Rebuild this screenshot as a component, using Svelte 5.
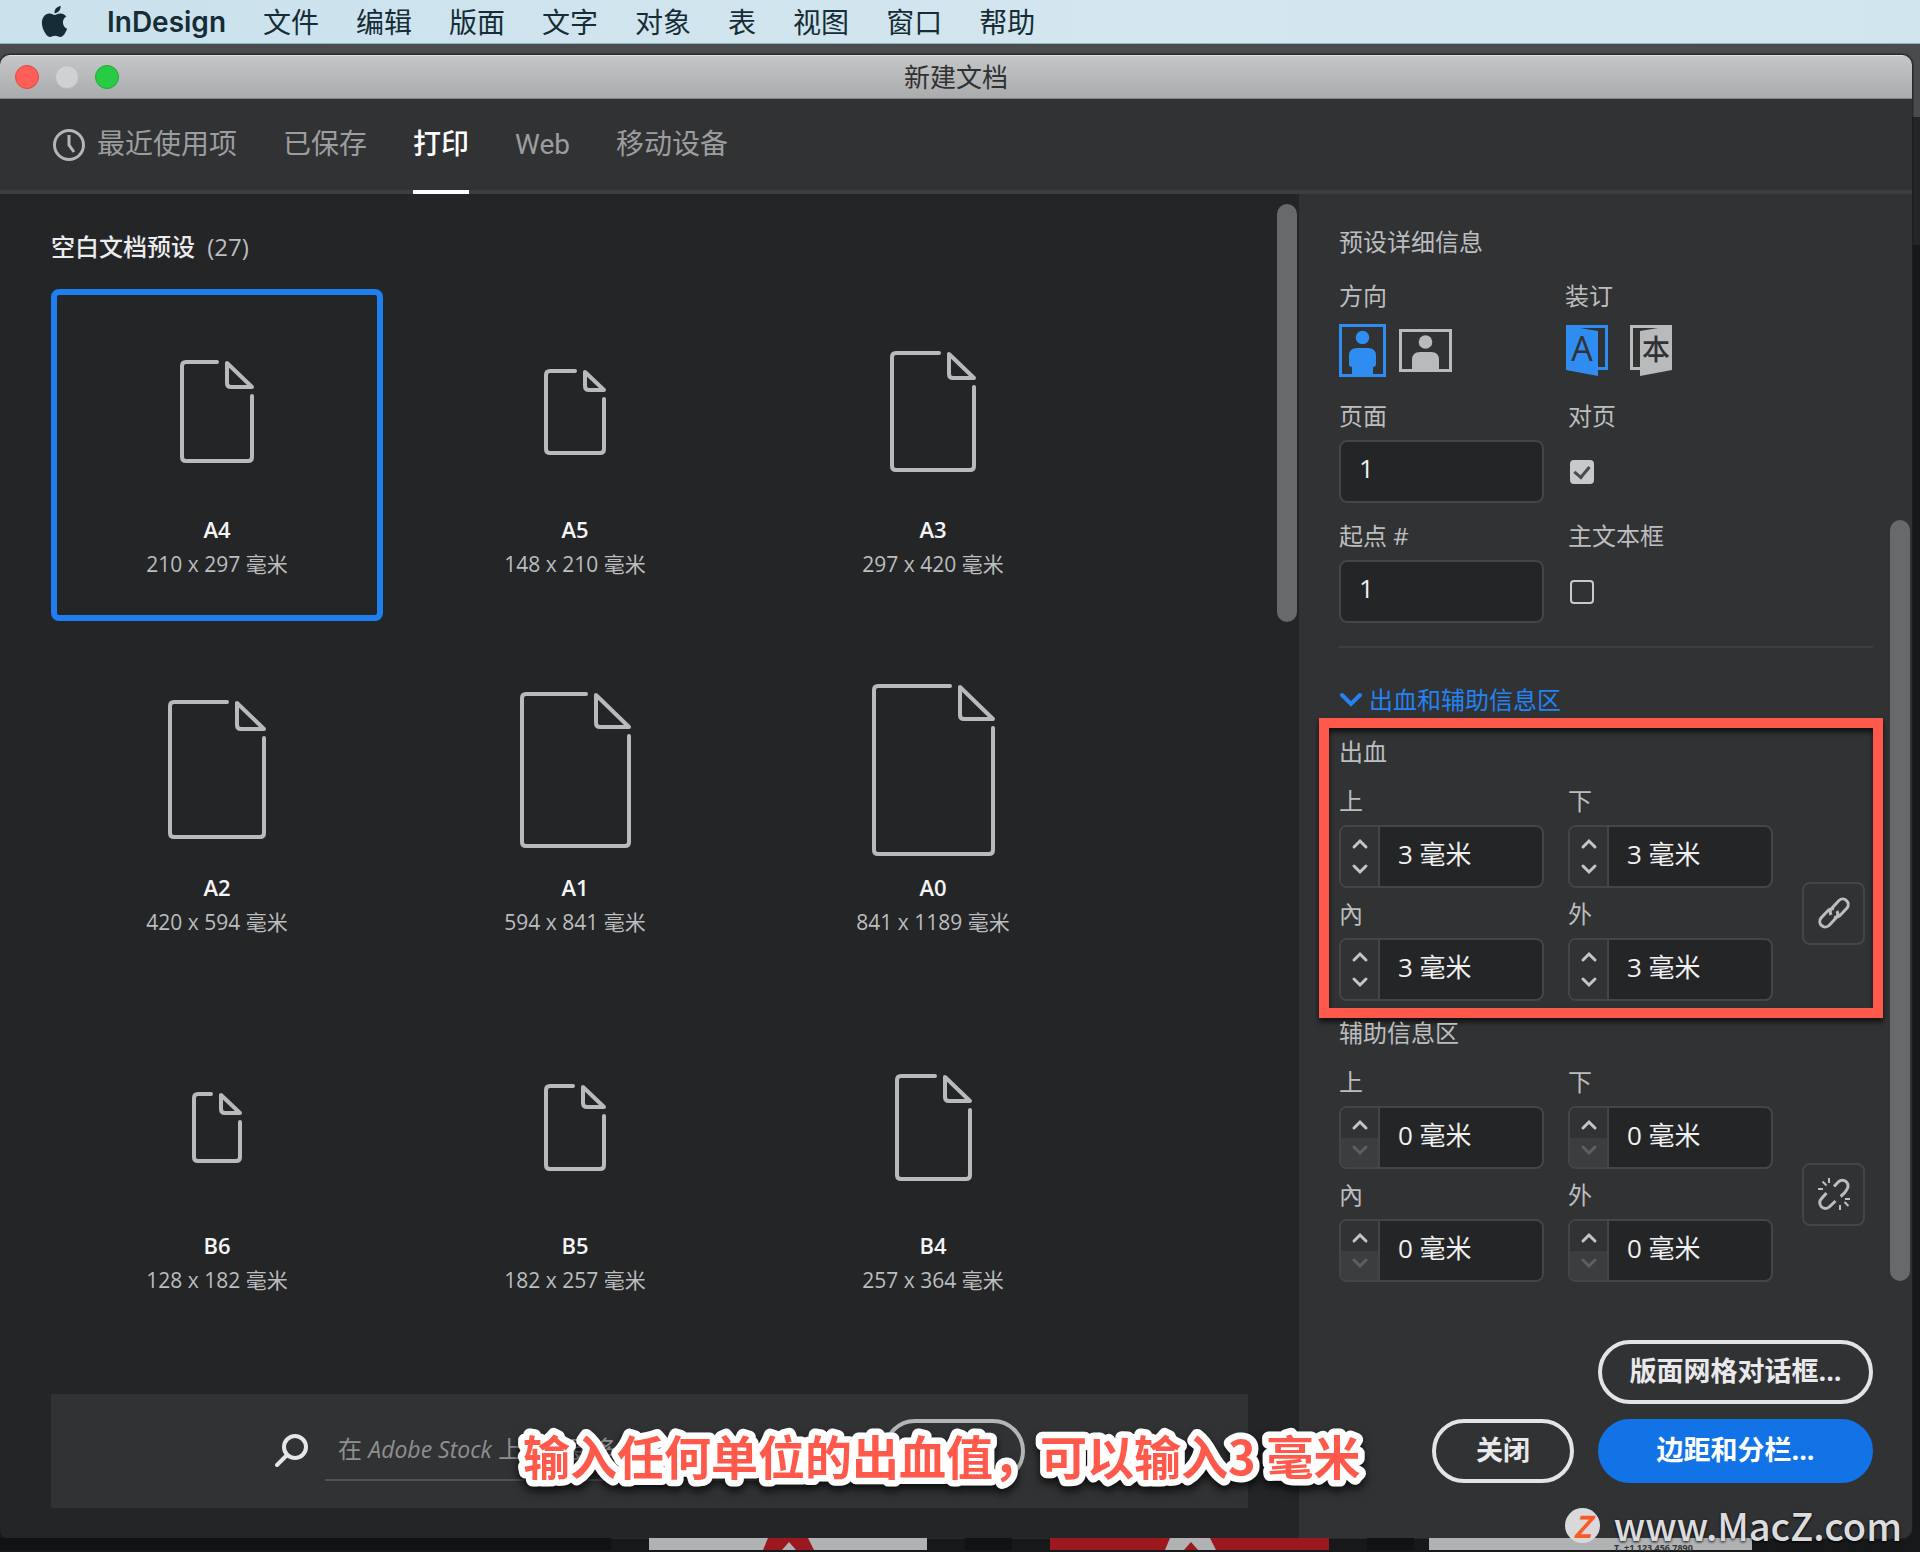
<script lang="ts">
	type Preset = { name: string; size: string; w: number; h: number; fold: number };

	const menus = ['文件', '编辑', '版面', '文字', '对象', '表', '视图', '窗口', '帮助'];
	const tabs = ['最近使用项', '已保存', '打印', 'Web', '移动设备'];

	const presets: Preset[] = [
		{ name: 'A4', size: '210 x 297', w: 74, h: 103, fold: 29 },
		{ name: 'A5', size: '148 x 210', w: 62, h: 86, fold: 23 },
		{ name: 'A3', size: '297 x 420', w: 86, h: 121, fold: 29 },
		{ name: 'A2', size: '420 x 594', w: 98, h: 139, fold: 31 },
		{ name: 'A1', size: '594 x 841', w: 111, h: 156, fold: 37 },
		{ name: 'A0', size: '841 x 1189', w: 123, h: 172, fold: 37 },
		{ name: 'B6', size: '128 x 182', w: 50, h: 71, fold: 23 },
		{ name: 'B5', size: '182 x 257', w: 62, h: 87, fold: 25 },
		{ name: 'B4', size: '257 x 364', w: 77, h: 107, fold: 29 }
	];

	let activeTab = $state('打印');
	let selected = $state('A4');
	let orientation = $state('portrait');
	let binding = $state('left');
	let pages = $state('1');
	let start = $state('1');
	let facing = $state(true);
	let textFrame = $state(false);
	let query = $state('');
	let open = $state(true);

	let bleed = $state({ linked: true, values: [3, 3, 3, 3] });
	let slug = $state({ linked: false, values: [0, 0, 0, 0] });
	const sides = ['上', '下', '內', '外'];

	function step(group: { linked: boolean; values: number[] }, i: number, by: number) {
		const next = Math.max(0, group.values[i] + by);
		group.values = group.values.map((v, n) => (group.linked || n === i ? next : v));
	}

	function sheet({ w, h, fold }: Preset) {
		return `M${w - fold - 8} 2H6Q2 2 2 6V${h - 6}Q2 ${h - 2} 6 ${h - 2}H${w - 6}Q${w - 2} ${h - 2} ${w - 2} ${h - 6}V${fold + 7}`;
	}

	function corner({ w, fold }: Preset) {
		return `M${w - fold + 2} 3V${fold - 6}q0 4 4 4H${w - 2}Z`;
	}
</script>

{#snippet margins(title: string, id: string, group: { linked: boolean; values: number[] })}
	<div class="margins" class:marked={id === 'bleed'}>
		<h3>{title}</h3>
		<div class="margin-row">
			<div class="sides">
				{#each sides as side, i}
					<div class="field">
						<label for="{id}-{i}">{side}</label>
						<div class="spin">
							<div class="steps">
								<button aria-label="{side} +" onclick={() => step(group, i, 1)}>
									<svg width="18" height="12" viewBox="0 0 18 12"><path d="M3 9l6-6 6 6" /></svg>
								</button>
								<button
									aria-label="{side} -"
									disabled={group.values[i] === 0}
									onclick={() => step(group, i, -1)}
								>
									<svg width="18" height="12" viewBox="0 0 18 12"><path d="M3 3l6 6 6-6" /></svg>
								</button>
							</div>
							<input id="{id}-{i}" type="text" value="{group.values[i]} 毫米" />
						</div>
					</div>
				{/each}
			</div>
			<button
				class="link"
				aria-label="link"
				aria-pressed={group.linked}
				onclick={() => (group.linked = !group.linked)}
			>
				{#if group.linked}
					<svg width="34" height="34" viewBox="0 0 34 34">
						<path
							d="M14 19q-2-4 1-7l7-7.500a5.500 5.500 0 0 1 8 7.500l-7 7.500q-3 2.500-6 1.500M20 15q2 4-1 7l-7 7.500a5.500 5.500 0 0 1-8-7.500l7-7.500q3-2.500 6-1.500"
						/>
					</svg>
				{:else}
					<svg width="34" height="34" viewBox="0 0 34 34">
						<path d="M17 9.500l4-4.300a5.600 5.600 0 0 1 8.600 7.600q-1.600 3.200-6 6.700" />
						<path d="M9.500 16l-5 5.600a5.600 5.600 0 0 0 8 8.200l6-5.800" />
						<path class="thin" d="M12 1v5M5.500 4.500l4 4M1 12h5M23 28v5M27.500 25l4 4M28 22h5" />
					</svg>
				{/if}
			</button>
		</div>
	</div>
{/snippet}

<div class="screen">
	<nav class="menubar">
		<svg class="apple" width="31" height="31" viewBox="0 0 24 24">
			<path
				d="M12.152 6.896c-.948 0-2.415-1.078-3.96-1.04-2.040.027-3.910 1.183-4.961 3.014-2.117 3.675-.546 9.103 1.519 12.090 1.013 1.454 2.208 3.090 3.792 3.039 1.520-.065 2.090-.987 3.935-.987 1.831 0 2.350.987 3.960.948 1.637-.026 2.676-1.480 3.676-2.948 1.156-1.688 1.636-3.325 1.662-3.415-.039-.013-3.182-1.221-3.220-4.857-.026-3.040 2.480-4.494 2.597-4.559-1.429-2.090-3.623-2.324-4.390-2.376-2-.156-3.675 1.090-4.610 1.090zM15.530 3.830c.843-1.012 1.400-2.427 1.245-3.830-1.207.052-2.662.805-3.532 1.818-.780.896-1.454 2.338-1.273 3.714 1.338.104 2.715-.688 3.559-1.701"
			/>
		</svg>
		<strong>InDesign</strong>
		{#each menus as menu}
			<button>{menu}</button>
		{/each}
	</nav>

	<div class="desktop">
		<main class="dialog">
			<header class="titlebar">
				<div class="lights">
					<button class="red" aria-label="关闭"></button>
					<button class="grey" aria-label="最小化"></button>
					<button class="green" aria-label="缩放"></button>
				</div>
				<h1>新建文档</h1>
			</header>

			<div class="tabs">
				<svg width="32" height="32" viewBox="0 0 32 32">
					<circle cx="16" cy="16" r="14.500" />
					<path d="M16 6v10l5 7" />
				</svg>
				{#each tabs as tab}
					<button class:active={tab === activeTab} onclick={() => (activeTab = tab)}>{tab}</button>
				{/each}
			</div>

			<div class="body">
				<section class="presets">
					<h2>空白文档预设 <span>(27)</span></h2>
					<div class="cards">
						{#each presets as preset}
							<button
								class="card"
								class:selected={preset.name === selected}
								onclick={() => (selected = preset.name)}
							>
								<span class="sheet">
									<svg width={preset.w} height={preset.h} viewBox="0 0 {preset.w} {preset.h}">
										<path d={sheet(preset)} />
										<path d={corner(preset)} />
									</svg>
								</span>
								<span class="name">{preset.name}</span>
								<span class="size">{preset.size} 毫米</span>
							</button>
						{/each}
					</div>
					<form class="stock" onsubmit={(e) => e.preventDefault()}>
						<svg width="34" height="34" viewBox="0 0 34 34">
							<circle cx="21" cy="13" r="11" />
							<path d="M13 21L3 31" />
						</svg>
						<label class="search">
							{#if !query}
								<span>在 <em>Adobe Stock</em> 上查找更多模板</span>
							{/if}
							<input type="text" aria-label="Adobe Stock" bind:value={query} />
						</label>
						<button class="pill dim" aria-label="前往"></button>
					</form>
					<div class="thumb"></div>
				</section>

				<aside class="details">
					<h3>预设详细信息</h3>
					<div class="columns icons">
						<div class="field">
							<span>方向</span>
							<div class="choice">
								<button
									aria-label="纵向"
									class:on={orientation === 'portrait'}
									onclick={() => (orientation = 'portrait')}
								>
									<svg width="47" height="53" viewBox="0 0 47 53">
										<path class="frame" d="M1.500 1.500h44v50h-44z" />
										<circle cx="23.500" cy="13.500" r="6.800" />
										<path d="M18 24h11q8 0 8 8v8q0 3-3 3v7H13v-7q-3 0-3-3v-8q0-8 8-8z" />
									</svg>
								</button>
								<button
									aria-label="横向"
									class:on={orientation === 'landscape'}
									onclick={() => (orientation = 'landscape')}
								>
									<svg width="53" height="43" viewBox="0 0 53 43">
										<path class="frame" d="M1.500 1.500h50v40h-50z" />
										<circle cx="26.500" cy="13" r="6.800" />
										<path d="M21 23h11q8 0 8 8v11H13V31q0-8 8-8z" />
									</svg>
								</button>
							</div>
						</div>
						<div class="field">
							<span>装订</span>
							<div class="choice wide">
								<button
									aria-label="从左到右"
									class:on={binding === 'left'}
									onclick={() => (binding = 'left')}
								>
									<svg width="42" height="51" viewBox="0 0 42 51">
										<path class="frame" d="M1.500 1.500h39v42h-39z" />
										<path d="M0 0h6l8 3 18 3v45L0 45z" />
										<text class="cut" x="16" y="36" font-size="34">A</text>
									</svg>
								</button>
								<button
									aria-label="从右到左"
									class:on={binding === 'right'}
									onclick={() => (binding = 'right')}
								>
									<svg width="42" height="51" viewBox="0 0 42 51">
										<path class="frame" d="M1.500 1.500h39v42h-39z" />
										<path d="M42 0h-6l-8 3-18 3v45l32-6z" />
										<text class="cut" x="26" y="35" font-size="28">本</text>
									</svg>
								</button>
							</div>
						</div>
					</div>
					<div class="columns">
						<div class="field">
							<label for="pages">页面</label>
							<input id="pages" class="box" type="text" bind:value={pages} />
						</div>
						<div class="field">
							<label for="facing">对页</label>
							<div class="tick"><input id="facing" type="checkbox" bind:checked={facing} /></div>
						</div>
						<div class="field">
							<label for="start">起点 #</label>
							<input id="start" class="box" type="text" bind:value={start} />
						</div>
						<div class="field">
							<label for="frame">主文本框</label>
							<div class="tick"><input id="frame" type="checkbox" bind:checked={textFrame} /></div>
						</div>
					</div>
					<hr />
					<button class="toggle" aria-expanded={open} onclick={() => (open = !open)}>
						<svg width="24" height="16" viewBox="0 0 24 16"><path d="M3 3l9 9 9-9" /></svg>
						出血和辅助信息区
					</button>
					{#if open}
						{@render margins('出血', 'bleed', bleed)}
						{@render margins('辅助信息区', 'slug', slug)}
					{/if}
					<div class="actions">
						<button class="pill long">版面网格对话框...</button>
						<div class="pair">
							<button class="pill">关闭</button>
							<button class="pill long primary">边距和分栏...</button>
						</div>
					</div>
					<div class="thumb"></div>
				</aside>
			</div>
		</main>

		<!-- the app window that shows below the dialog -->
		<svg class="behind" width="1912" height="14" viewBox="0 0 1912 14">
			<path fill="#111214" d="M0 0h611v12H0zM965 0h47v12h-47zM1367 0h47v12h-47z" />
			<path fill="#b1b2b4" d="M649 0h278v12H649zM1429 0h323v12h-323z" />
			<path fill="#9b181f" d="M1050 0h279v12h-279zM768 0h40l6 12h-18l-7-8-7 8h-19z" />
			<path fill="#b1b2b4" d="M1170 0h40l6 12h-18l-7-8-7 8h-19z" />
			<text x="1614" y="13" fill="#333" font-size="9" font-weight="700">T. +1 123 456 7890</text>
		</svg>
	</div>

	<svg class="caption" width="880" height="80" viewBox="0 0 880 80">
		<text x="12" y="55">输入任何单位的出血值，可以输入3 毫米</text>
	</svg>
	<a class="site" href="http://www.MacZ.com"><span>Z</span>www.MacZ.com</a>
</div>

<style>
	:global(body) {
		background: #17181a;
	}

	.screen {
		position: relative;
		overflow: hidden;
		font-family: 'Open Sans', 'Noto Sans CJK SC', sans-serif;
		font-size: 24px;
		line-height: 28px;
		color: #bcbdbf;
	}

	.screen * {
		box-sizing: border-box;
	}

	button,
	input {
		font: inherit;
		color: inherit;
		background: none;
		border: none;
		padding: 0;
		margin: 0;
	}

	h1,
	h2,
	h3 {
		margin: 0;
		font-size: inherit;
		font-weight: 400;
	}

	svg {
		display: block;
		flex: none;
	}

	.menubar {
		display: flex;
		align-items: center;
		gap: 37px;
		height: 44px;
		padding-left: 39px;
		background: linear-gradient(90deg, #cae2ec, #d4e6ef 60%, #d0e6ec);
		border-bottom: 1px solid #8fb4c2;
		color: #162c36;
		font-size: 28px;
	}

	.apple {
		fill: #162c36;
	}

	.menubar strong {
		font-family: Inter, sans-serif;
		font-weight: 600;
	}

	.desktop {
		padding: 11px 8px 0 0;
		background: linear-gradient(#4a4b4d 73px, #242527 73px, #242527 201px, #17181a 201px);
	}

	.dialog {
		border-radius: 10px;
		overflow: hidden;
		box-shadow: 0 0 2px 1px #1c1d1f, 0 1px #4d4e50;
	}

	.titlebar {
		display: grid;
		grid-template-columns: 1fr auto 1fr;
		align-items: center;
		height: 44px;
		padding: 0 15px;
		background: linear-gradient(#c5c6c8, #aaabad);
		border-top: 1px solid #e2e2e4;
		border-bottom: 1px solid #838486;
		color: #303133;
		font-size: 26px;
	}

	.lights {
		display: flex;
		gap: 16px;
	}

	.lights button {
		width: 24px;
		height: 24px;
		border-radius: 50%;
	}

	.red {
		background: #ff5f57;
		border: 1px solid #e14942;
	}

	.grey {
		background: #d0d1d3;
		border: 1px solid #b9babc;
	}

	.green {
		background: #28cb44;
		border: 1px solid #1dab32;
	}

	.tabs {
		display: flex;
		align-items: stretch;
		gap: 46px;
		height: 95px;
		padding-left: 53px;
		background: #313234;
		border-bottom: 4px solid #3c3d3f;
		font-family: Roboto, 'Noto Sans CJK SC', sans-serif;
		font-size: 28px;
		color: #9c9d9f;
	}

	.tabs svg {
		align-self: center;
		margin-right: -34px;
		fill: none;
		stroke: #b4b5b7;
		stroke-width: 3;
	}

	.tabs button {
		margin-bottom: -4px;
		padding-bottom: 4px;
		border-top: 4px solid transparent;
		border-bottom: 4px solid transparent;
	}

	.tabs .active {
		color: #fff;
		font-weight: 500;
		border-bottom-color: #fff;
	}

	.body {
		display: flex;
	}

	.presets {
		position: relative;
		flex: 1;
		display: flex;
		flex-direction: column;
		padding: 39px 51px 30px;
		background: #242527;
	}

	h2 {
		margin-bottom: 28px;
		font-weight: 500;
		color: #ececee;
	}

	h2 span {
		margin-left: 6px;
		font-weight: 400;
		color: #bcbdbf;
	}

	.cards {
		display: grid;
		grid-template-columns: repeat(auto-fill, 332px);
		gap: 26px;
	}

	.card {
		display: flex;
		flex-direction: column;
		align-items: center;
		height: 332px;
		padding-top: 16px;
		border: 6px solid transparent;
		border-radius: 8px;
		font-size: 21px;
	}

	.card.selected {
		border-color: #1f7ff0;
	}

	.sheet {
		display: flex;
		align-items: center;
		height: 201px;
	}

	.sheet svg {
		fill: none;
		stroke: #b9babc;
		stroke-width: 4;
		stroke-linecap: round;
		stroke-linejoin: round;
	}

	.name {
		line-height: 34px;
		font-size: 22px;
		font-weight: 600;
		color: #f4f4f6;
	}

	.size {
		line-height: 37px;
	}

	.stock {
		display: flex;
		align-items: center;
		height: 114px;
		margin-top: auto;
		padding: 0 223px;
		background: #313234;
	}

	.stock svg {
		fill: none;
		stroke: #e6e6e8;
		stroke-width: 4;
		stroke-linecap: round;
	}

	.search {
		position: relative;
		flex: 1;
		display: flex;
		align-items: center;
		height: 60px;
		margin: 0 25px 0 17px;
		padding: 0 13px 3px;
		border-bottom: 2px solid #505153;
		color: #8e8f91;
	}

	.search span {
		position: absolute;
		white-space: nowrap;
	}

	.search em {
		font-size: 23px;
	}

	.search input {
		width: 100%;
	}

	.thumb {
		position: absolute;
		top: 10px;
		right: 2px;
		width: 20px;
		height: 418px;
		border-radius: 10px;
		background: #68696b;
	}

	.details {
		position: relative;
		width: 613px;
		padding: 34px 39px 55px 40px;
		background: #313234;
	}

	.details > .thumb {
		top: 326px;
		height: 761px;
	}

	.columns {
		display: grid;
		grid-template-columns: 205px 205px;
		gap: 19px 24px;
		margin-top: 25px;
	}

	.columns.icons {
		column-gap: 21px;
		margin-top: 26px;
	}

	.field {
		display: flex;
		flex-direction: column;
		gap: 10px;
		min-width: 0;
	}

	.icons .field {
		gap: 14px;
	}

	.choice {
		display: flex;
		align-items: center;
		gap: 13px;
		height: 53px;
	}

	.choice.wide {
		gap: 22px;
		padding-left: 1px;
	}

	.choice button {
		color: #b9babc;
	}

	.choice .on {
		color: #2f8df2;
	}

	.choice svg {
		fill: currentColor;
	}

	.choice .frame {
		fill: none;
		stroke: currentColor;
		stroke-width: 3;
	}

	.choice .cut {
		fill: #313234;
		text-anchor: middle;
		font-weight: 500;
	}

	.box,
	.spin {
		height: 63px;
		border: 2px solid #444547;
		border-radius: 8px;
		background: #242527;
		color: #f0f0f2;
		font-size: 26px;
	}

	.box {
		width: 100%;
		padding: 0 18px 8px;
	}

	.tick {
		display: flex;
		align-items: center;
		height: 63px;
		padding-left: 2px;
	}

	.tick input {
		appearance: none;
		width: 24px;
		height: 24px;
		border: 2px solid #c8c9cb;
		border-radius: 4px;
	}

	.tick input:checked {
		background: #c8c9cb;
	}

	.tick input:checked::after {
		content: '';
		display: block;
		width: 7px;
		height: 12px;
		margin: 1px auto;
		border: solid #4a4b4d;
		border-width: 0 3px 3px 0;
		transform: rotate(40deg);
	}

	hr {
		height: 2px;
		margin: 23px 0 38px;
		border: none;
		background: #3d3e40;
	}

	.toggle {
		display: flex;
		align-items: center;
		gap: 6px;
		color: #2383f3;
	}

	.toggle svg {
		fill: none;
		stroke: currentColor;
		stroke-width: 4;
		stroke-linecap: round;
	}

	.margins {
		position: relative;
		margin-top: 18px;
	}

	.marked {
		margin-top: 24px;
	}

	.marked::after {
		content: '';
		position: absolute;
		inset: -20px -10px -17px -20px;
		border: 10px solid #ff594b;
		box-shadow: 0 4px 5px #111, inset 0 4px 5px #111;
		pointer-events: none;
	}

	.margin-row {
		display: flex;
		align-items: center;
		gap: 29px;
		margin-top: 21px;
	}

	.sides {
		display: grid;
		grid-template-columns: 205px 205px;
		gap: 12px 24px;
	}

	.spin {
		display: flex;
		overflow: hidden;
	}

	.steps {
		display: flex;
		flex-direction: column;
		width: 39px;
		flex: none;
		background: #313234;
		border-right: 2px solid #444547;
	}

	.steps button {
		flex: 1;
		display: flex;
		align-items: center;
		justify-content: center;
		padding: 4px 0 0;
	}

	.steps button:last-child {
		padding: 0 0 4px;
	}

	.steps button:disabled {
		background: #3c3d3f;
	}

	.steps svg {
		fill: none;
		stroke: #c4c5c7;
		stroke-width: 3;
		stroke-linecap: round;
	}

	.steps button:disabled svg {
		stroke: #5e5f61;
	}

	.spin input {
		flex: 1;
		min-width: 0;
		padding: 0 0 6px 18px;
	}

	.link {
		display: flex;
		align-items: center;
		justify-content: center;
		width: 63px;
		height: 63px;
		margin-top: 38px;
		border: 2px solid #444547;
		border-radius: 8px;
	}

	.link svg {
		fill: none;
		stroke: #bcbdbf;
		stroke-width: 3;
	}

	.link .thin {
		stroke-width: 2;
	}

	.actions,
	.pair {
		display: flex;
		justify-content: flex-end;
		gap: 24px;
	}

	.actions {
		flex-direction: column;
		align-items: flex-end;
		gap: 15px;
		margin-top: 58px;
	}

	.pill {
		width: 142px;
		height: 64px;
		padding-bottom: 2px;
		border: 4px solid #e4e4e6;
		border-radius: 32px;
		color: #e9e9eb;
		font-size: 27px;
		font-weight: 700;
	}

	.long {
		width: 275px;
	}

	.primary {
		border-color: #1173e6;
		background: #1173e6;
		color: #fff;
	}

	.dim {
		border-color: #b4b5b7;
	}

	.behind {
		width: 100%;
	}

	.caption {
		position: absolute;
		left: 511px;
		bottom: 52px;
		overflow: visible;
		fill: #ff594b;
		stroke: #fff;
		stroke-width: 13;
		stroke-linejoin: round;
		paint-order: stroke;
		font-family: 'Noto Sans CJK SC', sans-serif;
		font-size: 47px;
		font-weight: 700;
		filter: drop-shadow(0 5px 4px rgba(0, 0, 0, 0.7));
	}

	.site {
		position: absolute;
		right: 18px;
		bottom: 7px;
		display: flex;
		align-items: center;
		gap: 14px;
		font-family: 'Noto Sans CJK SC', sans-serif;
		font-size: 38px;
		font-weight: 500;
		line-height: 40px;
		color: #dcdcde;
		text-decoration: none;
		text-shadow: 0 1px 3px #000;
	}

	.site span {
		width: 35px;
		height: 35px;
		border-radius: 50%;
		background: #d9d9db;
		color: #fa5a28;
		font-size: 30px;
		font-style: italic;
		font-weight: 700;
		line-height: 35px;
		text-align: center;
		text-shadow: none;
	}
</style>
